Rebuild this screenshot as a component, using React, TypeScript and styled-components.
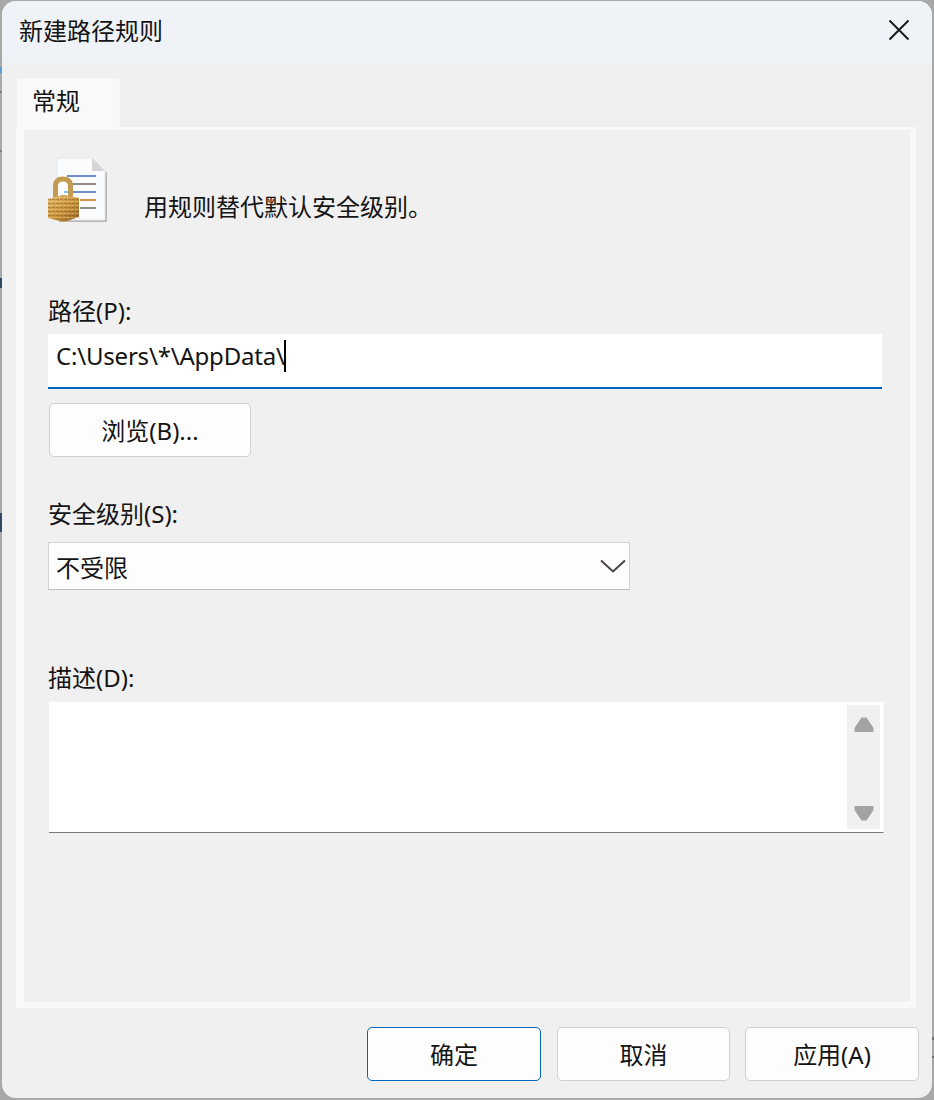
import React from "react";
import styled, { createGlobalStyle } from "styled-components";

const GlobalStyle = createGlobalStyle`
    html, body {
        margin: 0;
        padding: 0;
        background: #a8a8a8;
    }
    body {
        font-family: "Noto Sans", "Noto Sans CJK SC", sans-serif;
        color: #141414;
    }
`;

// the desktop behind the dialog only shows as a few specks along its edges
const edgeMarks = [
    ["#5c9bd6", "0 67px", "2px 6px"],
    ["#7c7c7c", "0 91px", "2px 2px"],
    ["#7c7c7c", "0 150px", "2px 2px"],
    ["#2f4a66", "0 278px", "2px 10px"],
    ["#2f4a66", "0 513px", "2px 19px"],
    ["#707070", "932px 1037px", "2px 3px"],
    ["#707070", "932px 1056px", "2px 2px"],
];

const Page = styled.div`
    width: 934px;
    height: 1100px;
    padding: 1px 2px 2px 2px;
    box-sizing: border-box;
    overflow: hidden;
    background-color: #a8a8a8;
    background-repeat: no-repeat;
    background-image: ${edgeMarks.map((m) => `linear-gradient(${m[0]}, ${m[0]})`).join(", ")};
    background-position: ${edgeMarks.map((m) => m[1]).join(", ")};
    background-size: ${edgeMarks.map((m) => m[2]).join(", ")};
`;

const DialogWindow = styled.div`
    display: flex;
    flex-direction: column;
    height: 1097px;
    border-radius: 14px;
    overflow: hidden;
    background: #f0f0f0;
`;

const TitleBar = styled.div`
    display: flex;
    flex: none;
    align-items: center;
    justify-content: space-between;
    box-sizing: border-box;
    height: 61px;
    padding: 0 22px 4px 17px;
    background: #eff3f8;
    font-size: 24px;
`;

const CloseIcon = styled.svg`
    width: 22px;
    height: 22px;
`;

const DialogBody = styled.div`
    display: flex;
    flex: 1;
    flex-direction: column;
    padding: 16px 14px 17px 14px;
`;

const TabStrip = styled.div`
    display: flex;
    flex: none;
    padding-left: 1px;
    margin-bottom: -1px;
    position: relative;
    z-index: 1;
`;

const Tab = styled.div`
    box-sizing: border-box;
    width: 103px;
    height: 50px;
    padding: 3px 0 0 14px;
    background: #f9f9f9;
    border: 1px solid #f6f6f6;
    border-bottom: none;
    border-radius: 3px 3px 0 0;
    font-size: 24px;
`;

const TabPanel = styled.div`
    box-sizing: border-box;
    display: flex;
    flex-direction: column;
    height: 881px;
    margin-right: 2px;
    padding: 27px 27px 0 24px;
    border-style: solid;
    border-color: #f9f9f9;
    border-width: 3px 6px 6px 8px;
    background: #f0f0f0;
`;

const HeaderRow = styled.div`
    display: flex;
    align-items: flex-end;
    gap: 37px;
    margin-left: -1px;
`;

const RuleIcon = styled.svg`
    flex: none;
    width: 60px;
    height: 66px;
`;

const Intro = styled.div`
    font-size: 24px;
    line-height: 32px;
`;

const FieldLabel = styled.div<{ $top: number }>`
    margin-top: ${(props) => props.$top}px;
    margin-bottom: 7px;
    font-size: 24px;
    line-height: 32px;
`;

const PathInput = styled.div`
    box-sizing: border-box;
    display: flex;
    align-items: center;
    height: 55px;
    margin-right: 1px;
    padding: 0 0 10px 8px;
    background: #ffffff;
    border-bottom: 2px solid #0067c0;
    font-size: 24px;
    letter-spacing: -0.2px;
`;

const Caret = styled.span`
    width: 2px;
    height: 32px;
    background: #000000;
    margin-left: -1px;
`;

const Button = styled.div<{ $primary?: boolean; $width: number }>`
    box-sizing: border-box;
    display: flex;
    flex: none;
    align-items: center;
    justify-content: center;
    width: ${(props) => props.$width}px;
    height: 54px;
    padding-bottom: 2px;
    background: #fdfdfd;
    border: 1px solid ${(props) => (props.$primary ? "#0067c0" : "#d0d0d0")};
    border-radius: 5px;
    font-size: 24px;
`;

const BrowseButton = styled(Button)`
    margin: 14px 0 0 1px;
`;

const OkButton = styled(Button)`
    margin-right: 1px;
`;

const SelectBox = styled.div`
    box-sizing: border-box;
    display: flex;
    align-items: center;
    justify-content: space-between;
    width: 582px;
    height: 48px;
    margin-top: 5px;
    padding: 0 3px 0 7px;
    background: #fdfdfd;
    border: 1px solid #d2d2d2;
    border-bottom-color: #bdbdbd;
    font-size: 24px;
`;

const Chevron = styled.svg`
    width: 26px;
    height: 14px;
`;

const DescriptionBox = styled.div`
    box-sizing: border-box;
    display: flex;
    justify-content: flex-end;
    width: 835px;
    height: 132px;
    margin-left: 1px;
    padding: 3px 3px 3px 0;
    background: #ffffff;
    border-top: 1px solid #f2f2f2;
    border-bottom: 1px solid #7a7a7a;
    border-right: 1px solid #f8f8f8;
`;

const ScrollTrack = styled.div`
    display: flex;
    flex-direction: column;
    align-items: center;
    justify-content: space-between;
    width: 33px;
    padding: 12px 0 8px;
    background: #f0f0f0;
`;

const ScrollArrow = styled.svg`
    width: 20px;
    height: 16px;
`;

const ActionBar = styled.div`
    display: flex;
    justify-content: flex-end;
    gap: 15px;
    margin-right: -1px;
    padding-top: 19px;
`;

const LockDocIcon = () => (
    <RuleIcon viewBox="0 0 60 66">
        <defs>
            <linearGradient id="lockBody" x1="0" y1="0" x2="1" y2="1">
                <stop offset="0" stopColor="#e2b868" />
                <stop offset="0.55" stopColor="#c8923c" />
                <stop offset="1" stopColor="#8f6120" />
            </linearGradient>
            <pattern id="lockGrain" width="4" height="4" patternUnits="userSpaceOnUse">
                <rect width="3" height="1" fill="#f3dca0" opacity="0.45" />
                <rect x="1" y="2" width="3" height="1" fill="#835818" opacity="0.45" />
            </pattern>
        </defs>
        <path d="M12 3 H47 L60 16 V65 H12 Z" fill="#8f8f8f" opacity="0.6" />
        <path d="M10 1 H45 L58 14 V63 H10 Z" fill="#fafbfd" stroke="#e4e4e4" strokeWidth="1" />
        <path d="M45 1 V14 H58 Z" fill="#d6d6d6" />
        <rect x="20" y="18" width="29" height="2" fill="#6f8fc6" />
        <rect x="23" y="26" width="26" height="2" fill="#8d8d8d" />
        <rect x="17" y="34" width="32" height="2" fill="#6f8fc6" />
        <rect x="17" y="34" width="8" height="2" fill="#7cc8ee" />
        <rect x="33" y="42" width="16" height="2" fill="#d0954a" />
        <rect x="33" y="50" width="16" height="2" fill="#8d8d8d" />
        <path d="M8.5 40 V29 Q8.5 22 16 22 Q23.5 22 23.5 29 V40" fill="none" stroke="#c29a50" strokeWidth="5" />
        <path d="M1 42 L16 38 L32 41 V60 L17 65 L1 61 Z" fill="url(#lockBody)" />
        <path d="M1 42 L16 38 L32 41 V60 L17 65 L1 61 Z" fill="url(#lockGrain)" />
    </RuleIcon>
);

export default function App() {
    return (
        <Page>
            <GlobalStyle />
            <DialogWindow>
                <TitleBar>
                    <span>新建路径规则</span>
                    <CloseIcon viewBox="0 0 22 22">
                        <path d="M1.5 1.5 L20.5 20.5 M20.5 1.5 L1.5 20.5" stroke="#1a1a1a" strokeWidth="2" fill="none" />
                    </CloseIcon>
                </TitleBar>
                <DialogBody>
                    <TabStrip>
                        <Tab>常规</Tab>
                    </TabStrip>
                    <TabPanel>
                        <HeaderRow>
                            <LockDocIcon />
                            <Intro>用规则替代默认安全级别。</Intro>
                        </HeaderRow>
                        <FieldLabel $top={72}>路径(P):</FieldLabel>
                        <PathInput>
                            C:\Users\*\AppData\
                            <Caret />
                        </PathInput>
                        <BrowseButton $width={202}>浏览(B)...</BrowseButton>
                        <FieldLabel $top={41}>安全级别(S):</FieldLabel>
                        <SelectBox>
                            不受限
                            <Chevron viewBox="0 0 26 14">
                                <path d="M1 1.5 L13 12.5 L25 1.5" stroke="#4a4343" strokeWidth="2" fill="none" />
                            </Chevron>
                        </SelectBox>
                        <FieldLabel $top={72}>描述(D):</FieldLabel>
                        <DescriptionBox>
                            <ScrollTrack>
                                <ScrollArrow viewBox="0 0 20 16">
                                    <path d="M7.5 0.5 H12.5 L19.5 11 V15 H0.5 V11 Z" fill="#a3a3a3" />
                                </ScrollArrow>
                                <ScrollArrow viewBox="0 0 20 16">
                                    <path d="M0.5 1 H19.5 V5 L12.5 15.5 H7.5 L0.5 5 Z" fill="#a3a3a3" />
                                </ScrollArrow>
                            </ScrollTrack>
                        </DescriptionBox>
                    </TabPanel>
                    <ActionBar>
                        <OkButton $primary $width={174}>确定</OkButton>
                        <Button $width={173}>取消</Button>
                        <Button $width={174}>应用(A)</Button>
                    </ActionBar>
                </DialogBody>
            </DialogWindow>
        </Page>
    );
}
